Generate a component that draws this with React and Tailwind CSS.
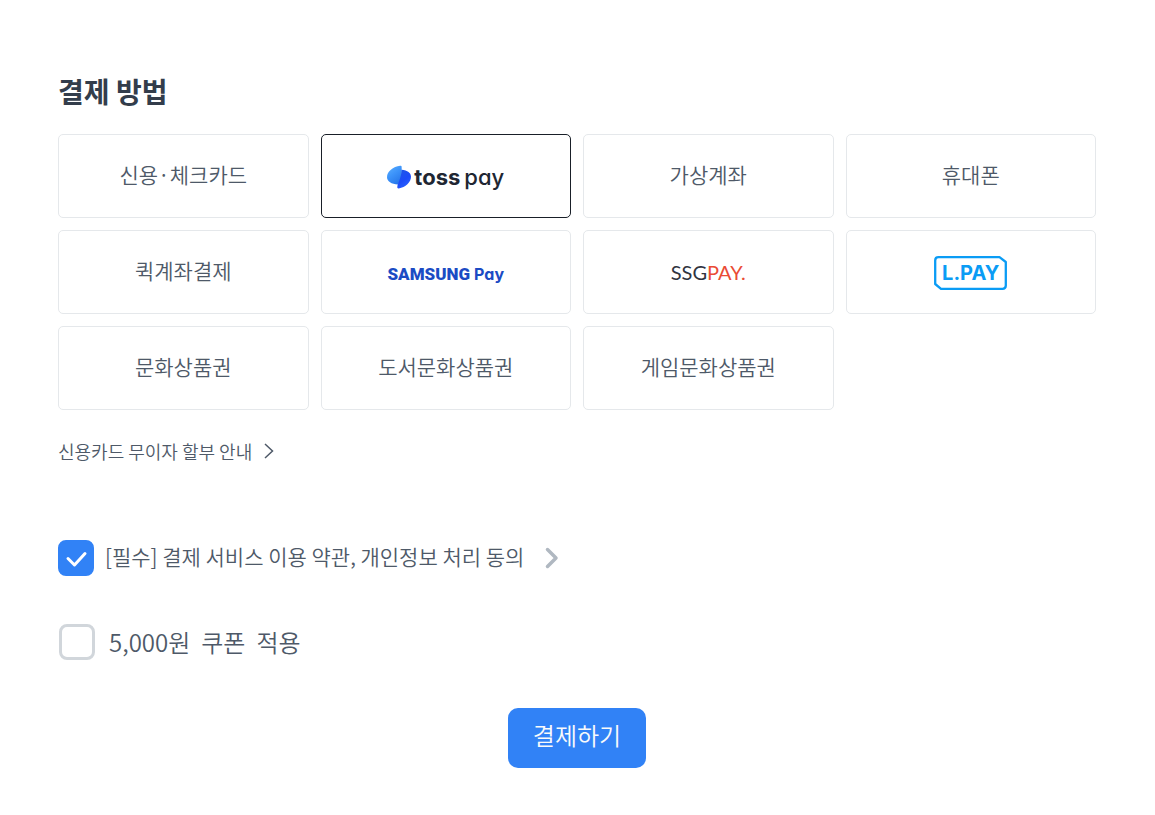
import { useState } from "react";

function TossLogo() {
  return (
    <span className="flex items-center gap-[3px] pt-[2px] text-[#202632]">
      <svg viewBox="0 0 24 24" className="h-6 w-6" aria-hidden="true">
        <defs>
          <linearGradient id="tossLight" x1="0" y1="0" x2="0.6" y2="1">
            <stop offset="0" stopColor="#5eb1ff" />
            <stop offset="0.5" stopColor="#3d94fa" />
            <stop offset="1" stopColor="#2878ea" />
          </linearGradient>
          <linearGradient id="tossDark" x1="0.2" y1="0" x2="0.7" y2="1">
            <stop offset="0" stopColor="#1f57e8" />
            <stop offset="0.55" stopColor="#1c4cf8" />
            <stop offset="1" stopColor="#2c62ff" />
          </linearGradient>
        </defs>
        <path d="M14.600 1.600C14.600 .9 14 .6 13.200 .8C6 1.600 0 6.500 0 12.300C0 16.500 4.500 19.300 11 19.600L15 12Z" fill="url(#tossLight)" />
        <path d="M14.600 4.800C20.500 5.200 24 8 24 11.800C24 17 18.500 22.500 11.800 23.400C10.700 23.500 10.200 23 10.300 22C10.800 17.500 14.300 13.500 14.600 4.800Z" fill="url(#tossDark)" />
      </svg>
      <span className="flex items-baseline gap-1 font-['Inter'] text-[22px] leading-6 [font-feature-settings:'cv11']">
        <b className="font-bold">toss</b>
        <span className="font-medium">pay</span>
      </span>
    </span>
  );
}

function SamsungLogo() {
  return (
    <span className="flex items-baseline gap-1 pt-[3px] leading-6 text-[#1b4bc4]">
      <b className="font-['Roboto'] text-[17px] font-black">SAMSUNG</b>
      <span className="font-['Inter'] text-[16px] font-bold [font-feature-settings:'cv11']">Pay</span>
    </span>
  );
}

function SsgLogo() {
  return (
    <span className="font-['Lato'] text-[20px] leading-6 font-normal text-[#30343f]">
      SSG<span className="text-[#ea4b35]">PAY.</span>
    </span>
  );
}

function LpayLogo() {
  return (
    <span className="relative mt-[2px] flex h-[34px] w-[73px] items-center justify-center text-[#0a9cf5]">
      <svg viewBox="0 0 73 34" className="absolute inset-0 h-full w-full" fill="none" aria-hidden="true">
        <path d="M4.500 1.200H65.500L71.800 6V29.500Q71.800 32.800 68.500 32.800H7L1.200 28V4.500Q1.200 1.200 4.500 1.200Z" stroke="currentColor" strokeWidth="2.300" strokeLinejoin="round" />
      </svg>
      <span className="font-['Inter'] text-[20px] font-bold leading-6">L.PAY</span>
    </span>
  );
}

const methods = [
  { id: "card", label: "신용·체크카드" },
  { id: "toss", label: "toss pay", Logo: TossLogo },
  { id: "virtual", label: "가상계좌" },
  { id: "phone", label: "휴대폰" },
  { id: "quick", label: "퀵계좌결제" },
  { id: "samsung", label: "SAMSUNG Pay", Logo: SamsungLogo },
  { id: "ssg", label: "SSGPAY.", Logo: SsgLogo },
  { id: "lpay", label: "L.PAY", Logo: LpayLogo },
  { id: "culture", label: "문화상품권" },
  { id: "book", label: "도서문화상품권" },
  { id: "game", label: "게임문화상품권" },
];

function Checkbox({ id, checked, onChange }) {
  return (
    <span className="relative flex h-9 w-9 shrink-0">
      <input
        id={id}
        type="checkbox"
        checked={checked}
        onChange={(e) => onChange(e.target.checked)}
        className="h-9 w-9 cursor-pointer appearance-none rounded-lg border-3 border-[#d1d6db] bg-white checked:border-[#3182f6] checked:bg-[#3182f6]"
      />
      {checked && (
        <svg viewBox="0 0 36 36" className="pointer-events-none absolute inset-0 h-9 w-9" fill="none" aria-hidden="true">
          <path d="M10 18.500L16.500 25L27 13.500" stroke="#fff" strokeWidth="3" strokeLinecap="round" strokeLinejoin="round" />
        </svg>
      )}
    </span>
  );
}

export default function App() {
  const [method, setMethod] = useState("toss");
  const [agreed, setAgreed] = useState(true);
  const [coupon, setCoupon] = useState(false);

  return (
    <main className="bg-white pt-[70px] pr-[59px] pb-12 pl-[58px] font-['Noto_Sans_CJK_KR',sans-serif] font-[350] text-[#4e5968]">
      <h1 className="text-[28px] leading-[42px] font-bold text-[#333d4b]">결제 방법</h1>
      <div className="mt-[22px] grid grid-cols-4 gap-3">
        {methods.map(({ id, label, Logo }) => (
          <button
            key={id}
            type="button"
            aria-pressed={method === id}
            onClick={() => setMethod(id)}
            className={`flex h-21 cursor-pointer items-center justify-center rounded-[5px] border text-[21px] leading-8 ${
              method === id ? "border-[#191f28]" : "border-[#e5e8eb]"
            }`}
          >
            {Logo ? <Logo /> : <span className="pb-1">{label}</span>}
          </button>
        ))}
      </div>

      <a href="#installment" className="mt-[27px] flex w-fit items-center gap-3 text-[18px] leading-7">
        신용카드 무이자 할부 안내
        <svg viewBox="0 0 10 16" className="h-4 w-[10px]" fill="none" aria-hidden="true">
          <path d="M1 1L8.500 8L1 15" stroke="currentColor" strokeWidth="1.500" />
        </svg>
      </a>

      <div className="mt-[75px] flex items-center">
        <Checkbox id="agree" checked={agreed} onChange={setAgreed} />
        <label htmlFor="agree" className="ml-[11px] cursor-pointer pb-1 text-[21px] leading-8">
          [필수] 결제 서비스 이용 약관, 개인정보 처리 동의
        </label>
        <a href="#terms" aria-label="약관 보기" className="ml-[21px] text-[#b0b8c1]">
          <svg viewBox="0 0 14 22" className="h-[22px] w-[14px]" fill="none" aria-hidden="true">
            <path d="M2.500 2.500L11 11L2.500 19.500" stroke="currentColor" strokeWidth="3.500" strokeLinecap="round" strokeLinejoin="round" />
          </svg>
        </a>
      </div>

      <div className="mt-12 flex items-center pl-px">
        <Checkbox id="coupon" checked={coupon} onChange={setCoupon} />
        <label htmlFor="coupon" className="ml-[14px] flex cursor-pointer gap-[11px] text-[24px] leading-9">
          <span>5,000원</span> <span>쿠폰</span> <span>적용</span>
        </label>
      </div>

      <div className="mt-12 flex justify-center">
        <button type="button" className="h-15 cursor-pointer rounded-[10px] bg-[#3182f6] px-[25px] pb-[6px] text-[24px] leading-9 text-[#f9fafb]">
          결제하기
        </button>
      </div>
    </main>
  );
}
